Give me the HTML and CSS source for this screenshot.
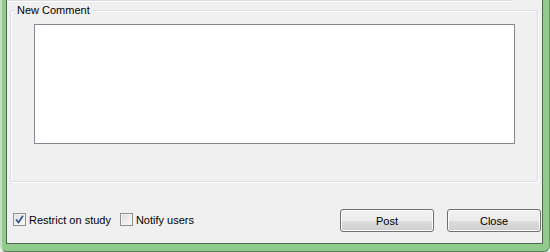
FILE: index.html
```html
<!DOCTYPE html>
<html lang="en">
<head>
    <meta charset="UTF-8">
    <title>New Comment</title>
    <link rel="stylesheet" href="styles.css">
</head>
<body>

    <div class="frame">
        <div class="client">
            <div class="top-edge"></div>

            <!-- Comment group -->
            <div class="group">
                <span class="legend">New Comment</span>
                <textarea class="comment-box"></textarea>
            </div>

            <!-- Options and actions -->
            <div class="actions">
                <label class="check">
                    <span class="box">
                        <svg width="9" height="9" viewBox="0 0 9 9">
                            <path d="M1 4.5 L3.5 7.5 L8 0.8" fill="none" stroke="#2a4d8e" stroke-width="1.6"/>
                        </svg>
                    </span>
                    Restrict on study
                </label>
                <label class="check">
                    <span class="box"></span>
                    Notify users
                </label>
                <div class="buttons">
                    <button class="btn">Post</button>
                    <button class="btn">Close</button>
                </div>
            </div>
        </div>
    </div>

</body>
</html>
```

FILE: styles.css
```css
html, body {
    margin: 0;
    padding: 0;
    width: 550px;
    height: 252px;
    overflow: hidden;
    background-color: #f0f0f0;
}

body {
    font-family: 'Liberation Sans', Arial, sans-serif;
    font-size: 11px;
    color: #000;
}

.frame {
    width: 550px;
    height: 252px;
    box-sizing: border-box;
    background-color: #8fcb8a;
    border-left: 2px solid #c9dcc8;
    border-right: 1px solid #6c9a69;
    border-bottom: 1px solid #5f7d5c;
    border-bottom-left-radius: 6px;
    border-bottom-right-radius: 6px;
    padding: 0 6px 7px 4px;
}

.client {
    position: relative;
    height: 244px;
    box-sizing: border-box;
    background-color: #f0f0f0;
    border-left: 1px solid #4e6a4d;
    border-right: 1px solid #4e6a4d;
    border-bottom: 1px solid #4e6a4d;
    display: flex;
    flex-direction: column;
}

.top-edge {
    height: 1px;
    width: 505px;
    border-bottom: 1px solid #fdfdfd;
    background-color: #dadde0;
}

.group {
    position: relative;
    margin: 8px 0 0 3px;
    width: 528px;
    height: 172px;
    box-sizing: border-box;
    border: 1px solid #d5dfe5;
    border-radius: 3px;
    box-shadow: inset 1px 1px 0 #fff, 1px 1px 0 #fff;
}

.legend {
    position: absolute;
    top: -7px;
    left: 4px;
    padding: 0 2px;
    line-height: 13px;
    background-color: #f0f0f0;
}

.comment-box {
    display: block;
    margin: 13px 0 0 23px;
    width: 481px;
    height: 120px;
    box-sizing: border-box;
    border: 1px solid #828790;
    background-color: #fff;
    resize: none;
    padding: 2px;
    font-family: inherit;
    font-size: 11px;
    outline: none;
}

.actions {
    display: flex;
    align-items: center;
    margin-top: 27px;
    padding: 0 1px 0 6px;
    height: 23px;
}

.check {
    display: flex;
    align-items: center;
    gap: 3px;
    margin-right: 9px;
    margin-top: -2px;
}

.box {
    width: 13px;
    height: 13px;
    box-sizing: border-box;
    border: 1px solid #8e8f8f;
    background: linear-gradient(135deg, #dcdcdc, #fbfbfb);
    box-shadow: inset 0 0 0 1px #f4f4f4;
    display: flex;
    align-items: center;
    justify-content: center;
}

.buttons {
    margin-left: auto;
    display: flex;
    gap: 13px;
}

.btn {
    width: 94px;
    height: 23px;
    box-sizing: border-box;
    border: 1px solid #707070;
    border-radius: 3px;
    background: linear-gradient(to bottom, #f2f2f2 0%, #ebebeb 50%, #dddddd 51%, #cfcfcf 100%);
    box-shadow: inset 0 0 0 1px #fcfcfc;
    font-family: inherit;
    font-size: 11px;
    color: #000;
    padding: 0;
}
```
